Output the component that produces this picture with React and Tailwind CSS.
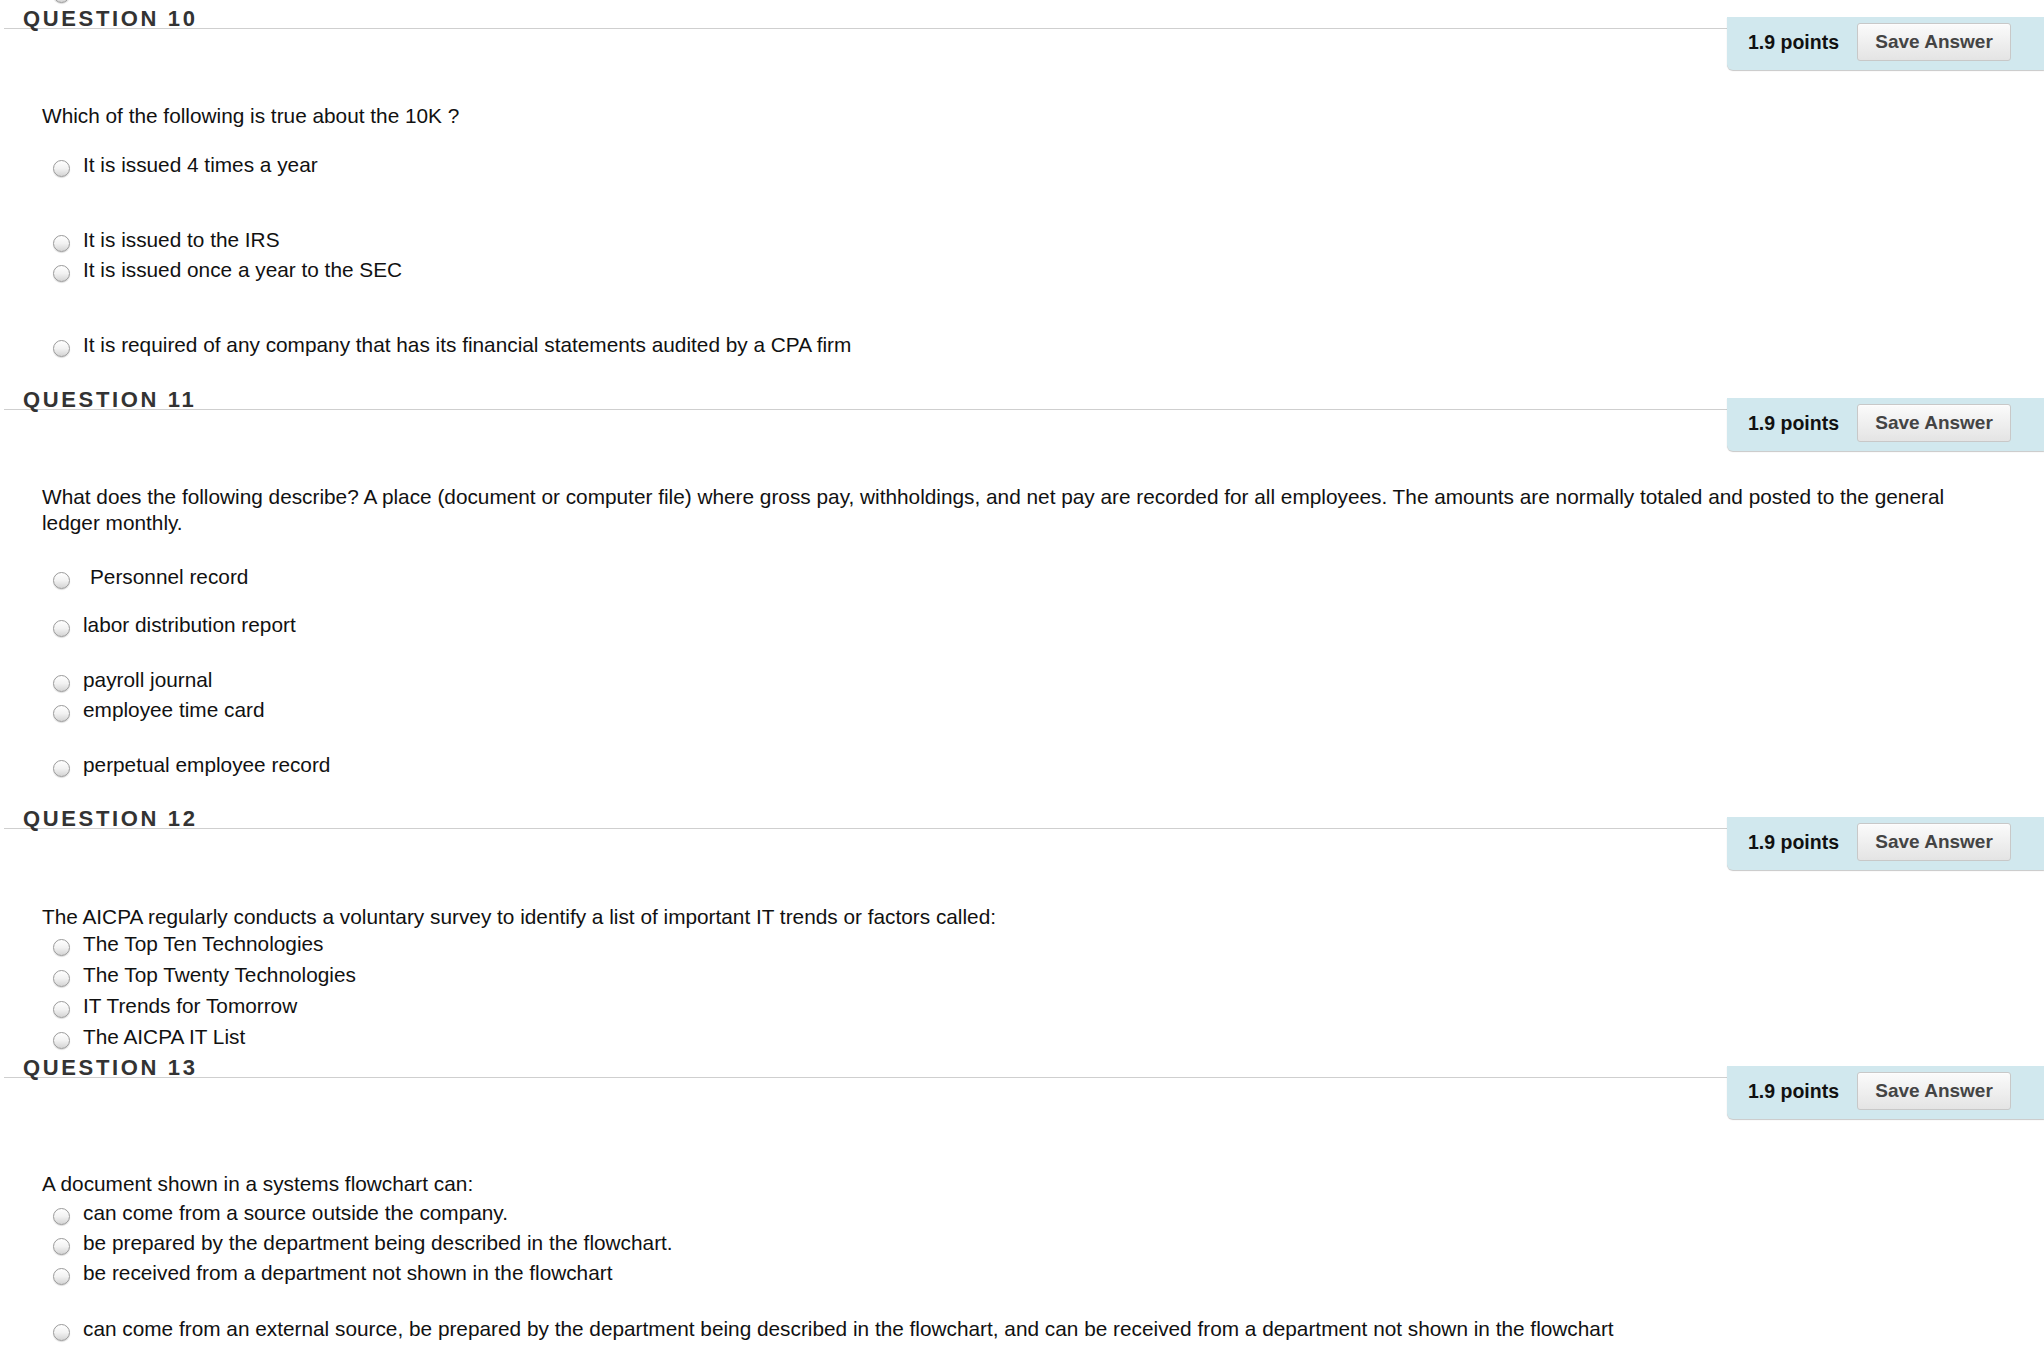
import React from "react";

function Radio({ className = "" }) {
  return (
    <div
      className={
        "w-[17px] h-[17px] shrink-0 rounded-full border border-[#9a9a9a] bg-gradient-to-b from-white via-[#f2f2f2] to-[#d4d4d4] shadow-[0_1px_1px_rgba(0,0,0,0.15)] " +
        className
      }
    />
  );
}

function Header({ num, className = "" }) {
  return (
    <div className={"flex items-start pl-[4px] " + className}>
      <h3 className="flex-1 border-b border-[#cfcfcf] pt-[10px] pl-[19px] text-[22px] leading-[18px] font-bold tracking-[0.12em] text-[#333]">
        QUESTION {num}
      </h3>
      <div className="mt-[17px] h-[53px] w-[317px] shrink-0 flex items-start pl-[21px] pt-[6px] bg-[#d1e8ee] rounded-bl-[6px] shadow-[0_1px_1px_rgba(0,0,0,0.22)]">
        <span className="h-[38px] flex items-center font-bold text-[#111] text-[19.5px]">1.9 points</span>
        <button className="ml-[18px] h-[38px] w-[154px] rounded-[3px] border border-[#c8c8c8] bg-gradient-to-b from-[#fbfbfb] to-[#e4e4e4] text-[19px] font-bold text-[#444] shadow-[0_1px_0_rgba(255,255,255,0.6)_inset]">
          Save Answer
        </button>
      </div>
    </div>
  );
}

function Opt({ children, className = "", textClass = "" }) {
  return (
    <div className={"flex items-center h-[30px] pl-[53px] " + className}>
      <Radio className="mt-[6px]" />
      <span className={"ml-[13px] whitespace-nowrap " + textClass}>{children}</span>
    </div>
  );
}

function QText({ children, className = "" }) {
  return <div className={"pl-[42px] " + className}>{children}</div>;
}

export default function App() {
  return (
    <div className="w-[2044px] h-[1368px] bg-white overflow-hidden font-['Liberation_Sans',Arial,Helvetica,sans-serif] text-[20.8px] leading-[30px] text-[#111]">
      <div className="flex h-0 pl-[53px]">
        <Radio className="-mt-[14px]" />
      </div>

      {/* Question 10 */}
      <Header num="10" />
      <QText className="mt-[31px]">Which of the following is true about the 10K ?</QText>
      <Opt className="mt-[19px]">It is issued 4 times a year</Opt>
      <Opt className="mt-[45px]">It is issued to the IRS</Opt>
      <Opt>It is issued once a year to the SEC</Opt>
      <Opt className="mt-[45px]">
        It is required of any company that has its financial statements audited by a CPA firm
      </Opt>

      {/* Question 11 */}
      <Header num="11" className="mt-[21px]" />
      <QText className="mt-[33px] w-[2040px] leading-[26px]">
        What does the following describe? A place (document or computer file) where gross pay, withholdings, and net pay are recorded for all employees. The amounts are normally totaled and posted to the general
        <br />
        ledger monthly.
      </QText>
      <Opt className="mt-[26px]" textClass="ml-[20px]">Personnel record</Opt>
      <Opt className="mt-[18px]">labor distribution report</Opt>
      <Opt className="mt-[25px]">payroll journal</Opt>
      <Opt>employee time card</Opt>
      <Opt className="mt-[25px]">perpetual employee record</Opt>

      {/* Question 12 */}
      <Header num="12" className="mt-[20px]" />
      <QText className="mt-[32px]">
        The AICPA regularly conducts a voluntary survey to identify a list of important IT trends or factors called:
      </QText>
      <Opt className="-mt-[3px]">The Top Ten Technologies</Opt>
      <Opt className="mt-[1px]">The Top Twenty Technologies</Opt>
      <Opt className="mt-[1px]">IT Trends for Tomorrow</Opt>
      <Opt className="mt-[1px]">The AICPA IT List</Opt>

      {/* Question 13 */}
      <Header num="13" className="-mt-[3px]" />
      <QText className="mt-[50px]">A document shown in a systems flowchart can:</QText>
      <Opt className="-mt-[1px]">can come from a source outside the company.</Opt>
      <Opt>be prepared by the department being described in the flowchart.</Opt>
      <Opt>be received from a department not shown in the flowchart</Opt>
      <Opt className="mt-[26px]">
        can come from an external source, be prepared by the department being described in the flowchart, and can be received from a department not shown in the flowchart
      </Opt>
    </div>
  );
}
